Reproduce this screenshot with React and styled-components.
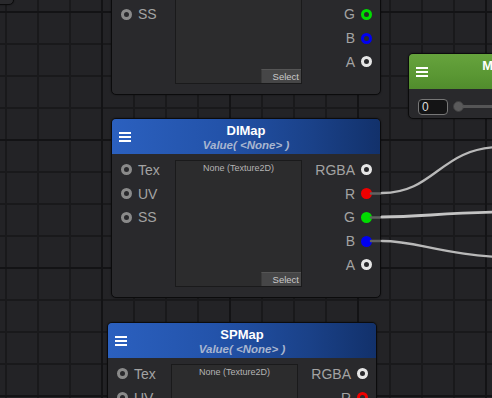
import React from 'react';
import styled, { createGlobalStyle } from 'styled-components';

const Global = createGlobalStyle`
  html, body { margin: 0; padding: 0; background: #232326; }
  body { font-family: "Liberation Sans", Arial, sans-serif; }
`;

const Canvas = styled.div`
  position: relative;
  width: 492px;
  height: 398px;
  overflow: hidden;
  background-color: #232326;
  background-image:
    linear-gradient(to right, #131315 2px, transparent 2px),
    linear-gradient(to bottom, #131315 2px, transparent 2px),
    linear-gradient(to right, #19191b 2px, transparent 2px),
    linear-gradient(to bottom, #19191b 2px, transparent 2px);
  background-size: 128px 128px, 128px 128px, 32px 32px, 32px 32px;
  background-position: 101px 0, 0 11px, 5px 0, 0 11px;
`;

const NodeBox = styled.div`
  position: absolute;
  left: ${(p) => p.$x}px;
  top: ${(p) => p.$y}px;
  width: ${(p) => p.$w}px;
  height: ${(p) => p.$h}px;
  box-sizing: border-box;
  display: flex;
  flex-direction: column;
  background: #29292c;
  border: 1px solid #0b0b0c;
  border-radius: 5px;
  overflow: hidden;
  box-shadow: 0 0 2px rgba(0, 0, 0, 0.45);
`;

const Header = styled.div`
  flex: none;
  height: 35px;
  box-sizing: border-box;
  display: grid;
  grid-template-columns: 1fr auto 1fr;
  align-items: center;
  padding: 0 7px;
  background: ${(p) =>
    p.$tone === 'green'
      ? 'linear-gradient(180deg, #66a33d 0%, #5a9733 60%, #518c2d 100%)'
      : 'linear-gradient(90deg, #2b60bf 0%, #2353aa 40%, #1a4188 75%, #12316b 100%)'};
`;

const TitleBlock = styled.div`
  align-self: start;
  padding-top: 5px;
  display: flex;
  flex-direction: column;
  align-items: center;
  white-space: nowrap;
`;

const Title = styled.div`
  font-size: 13px;
  line-height: 14px;
  font-weight: bold;
  color: #ffffff;
`;

const Subtitle = styled.div`
  font-size: 11.5px;
  line-height: 13px;
  font-weight: bold;
  font-style: italic;
  color: #a9b6d0;
  margin-top: 1px;
`;

const Burger = styled.svg`
  width: 12px;
  height: 10px;
  display: block;
`;

const Body = styled.div`
  flex: 1;
  display: flex;
  align-items: flex-start;
  min-height: 0;
`;

const LeftCol = styled.div`
  flex: none;
  width: 63px;
  box-sizing: border-box;
  padding: 4px 0 0 9px;
  display: flex;
  flex-direction: column;
`;

const RightCol = styled.div`
  flex: 1;
  box-sizing: border-box;
  padding: 4px 8px 0 0;
  display: flex;
  flex-direction: column;
  align-items: flex-end;
`;

const PortRow = styled.div`
  height: 23.75px;
  display: flex;
  align-items: center;
  gap: 6px;
  flex-direction: ${(p) => (p.$side === 'right' ? 'row-reverse' : 'row')};
`;

const Dot = styled.span`
  flex: none;
  width: 11px;
  height: 11px;
  box-sizing: border-box;
  border-radius: 50%;
  border: 3px solid ${(p) => p.$c};
  background: ${(p) => (p.$filled ? p.$c : 'transparent')};
`;

const PortLabel = styled.span`
  font-size: 14px;
  line-height: 16px;
  color: #a3a3a3;
`;

const Preview = styled.div`
  flex: none;
  margin-top: 6px;
  width: 127px;
  height: 127px;
  box-sizing: border-box;
  border: 1px solid #1a1a1b;
  background: #2c2c2d;
  display: flex;
  flex-direction: column;
  align-items: center;
`;

const PreviewText = styled.div`
  padding-top: 2px;
  font-size: 9px;
  line-height: 11px;
  color: #b4b4b4;
`;

const SelectButton = styled.div`
  margin-top: auto;
  align-self: flex-end;
  width: 40px;
  height: 14px;
  box-sizing: border-box;
  padding-right: 2px;
  background: #464647;
  border-top: 1px solid #555;
  border-left: 1px solid #3a3a3a;
  font-size: 9.5px;
  line-height: 13px;
  color: #cacaca;
  text-align: right;
`;

const SliderBody = styled.div`
  flex: 1;
  display: flex;
  align-items: center;
  padding: 6px 0 0 9px;
  align-self: flex-start;
  width: 100%;
  box-sizing: border-box;
`;

const NumberField = styled.div`
  flex: none;
  width: 30px;
  height: 16px;
  box-sizing: border-box;
  border: 1px solid #777;
  border-radius: 4px;
  background: #141415;
  padding-left: 3px;
  font-size: 12px;
  line-height: 14px;
  color: #dcdcdc;
`;

const Knob = styled.span`
  flex: none;
  margin-left: 5px;
  width: 11px;
  height: 11px;
  box-sizing: border-box;
  border-radius: 50%;
  background: #5a5a5b;
  border: 1px solid #3f3f40;
`;

const Track = styled.span`
  flex: 1;
  height: 3px;
  background: #555556;
  margin-left: -1px;
`;

const Wires = styled.svg`
  position: absolute;
  left: 0;
  top: 0;
  width: 492px;
  height: 398px;
  pointer-events: none;
`;

const BurgerIcon = () => (
  <Burger viewBox="0 0 12 10">
    <rect x="0" y="0" width="12" height="2" fill="#fff" />
    <rect x="0" y="4" width="12" height="2" fill="#fff" />
    <rect x="0" y="8" width="12" height="2" fill="#fff" />
  </Burger>
);

const Node = ({ x, y, w, h, tone, title, subtitle, children, headless }) => (
  <NodeBox $x={x} $y={y} $w={w} $h={h}>
    {!headless && (
      <Header $tone={tone}>
        <BurgerIcon />
        <TitleBlock>
          <Title>{title}</Title>
          {subtitle && <Subtitle>{subtitle}</Subtitle>}
        </TitleBlock>
      </Header>
    )}
    {children}
  </NodeBox>
);

const GRAY = '#8a8a8a';
const WHITE = '#e6e6e6';
const RED = '#ee0000';
const GREEN = '#00dc00';
const BLUE = '#0000f0';

const TextureNode = ({ x, y, title, connected }) => {
  const right = [
    { label: 'RGBA', c: WHITE },
    { label: 'R', c: RED, filled: connected },
    { label: 'G', c: GREEN, filled: connected },
    { label: 'B', c: BLUE, filled: connected },
    { label: 'A', c: WHITE },
  ];
  return (
    <Node x={x} y={y} w={270} h={180} title={title} subtitle="Value( <None> )">
      <Body>
        <LeftCol>
          {['Tex', 'UV', 'SS'].map((l) => (
            <PortRow key={l}>
              <Dot $c={GRAY} />
              <PortLabel>{l}</PortLabel>
            </PortRow>
          ))}
        </LeftCol>
        <Preview>
          <PreviewText>None (Texture2D)</PreviewText>
          <SelectButton>Select</SelectButton>
        </Preview>
        <RightCol>
          {right.map((p) => (
            <PortRow key={p.label} $side="right">
              <Dot $c={p.c} $filled={p.filled} />
              <PortLabel>{p.label}</PortLabel>
            </PortRow>
          ))}
        </RightCol>
      </Body>
    </Node>
  );
};

export default function App() {
  return (
    <>
      <Global />
      <Canvas>
        <Node x={-257} y={-175} w={271} h={180} headless>
          <Body />
        </Node>
        <TextureNode x={111} y={-85} title="Map" />
        <TextureNode x={111} y={118} title="DIMap" connected />
        <TextureNode x={107} y={322} title="SPMap" />
        <Node x={408} y={53} w={196} h={66} tone="green" title="Metallic">
          <SliderBody>
            <NumberField>0</NumberField>
            <Knob />
            <Track />
          </SliderBody>
        </Node>
        <Wires viewBox="0 0 492 398">
          <g fill="none" strokeLinecap="round">
            <path d="M371 193.5 L381 193.5" stroke="#616161" strokeWidth="2.5" />
            <path d="M371 217.5 L381 217.5" stroke="#616161" strokeWidth="2.5" />
            <path d="M371 241 L381 241" stroke="#616161" strokeWidth="2.5" />
            <path d="M382 193 C435 193, 440 148, 500 147" stroke="#b9b9b9" strokeWidth="2.3" />
            <path d="M382 217 C420 217, 440 213, 500 212" stroke="#c4c4c4" strokeWidth="2.8" />
            <path d="M382 241 C420 241, 440 256, 520 258" stroke="#b9b9b9" strokeWidth="2.3" />
          </g>
        </Wires>
      </Canvas>
    </>
  );
}
